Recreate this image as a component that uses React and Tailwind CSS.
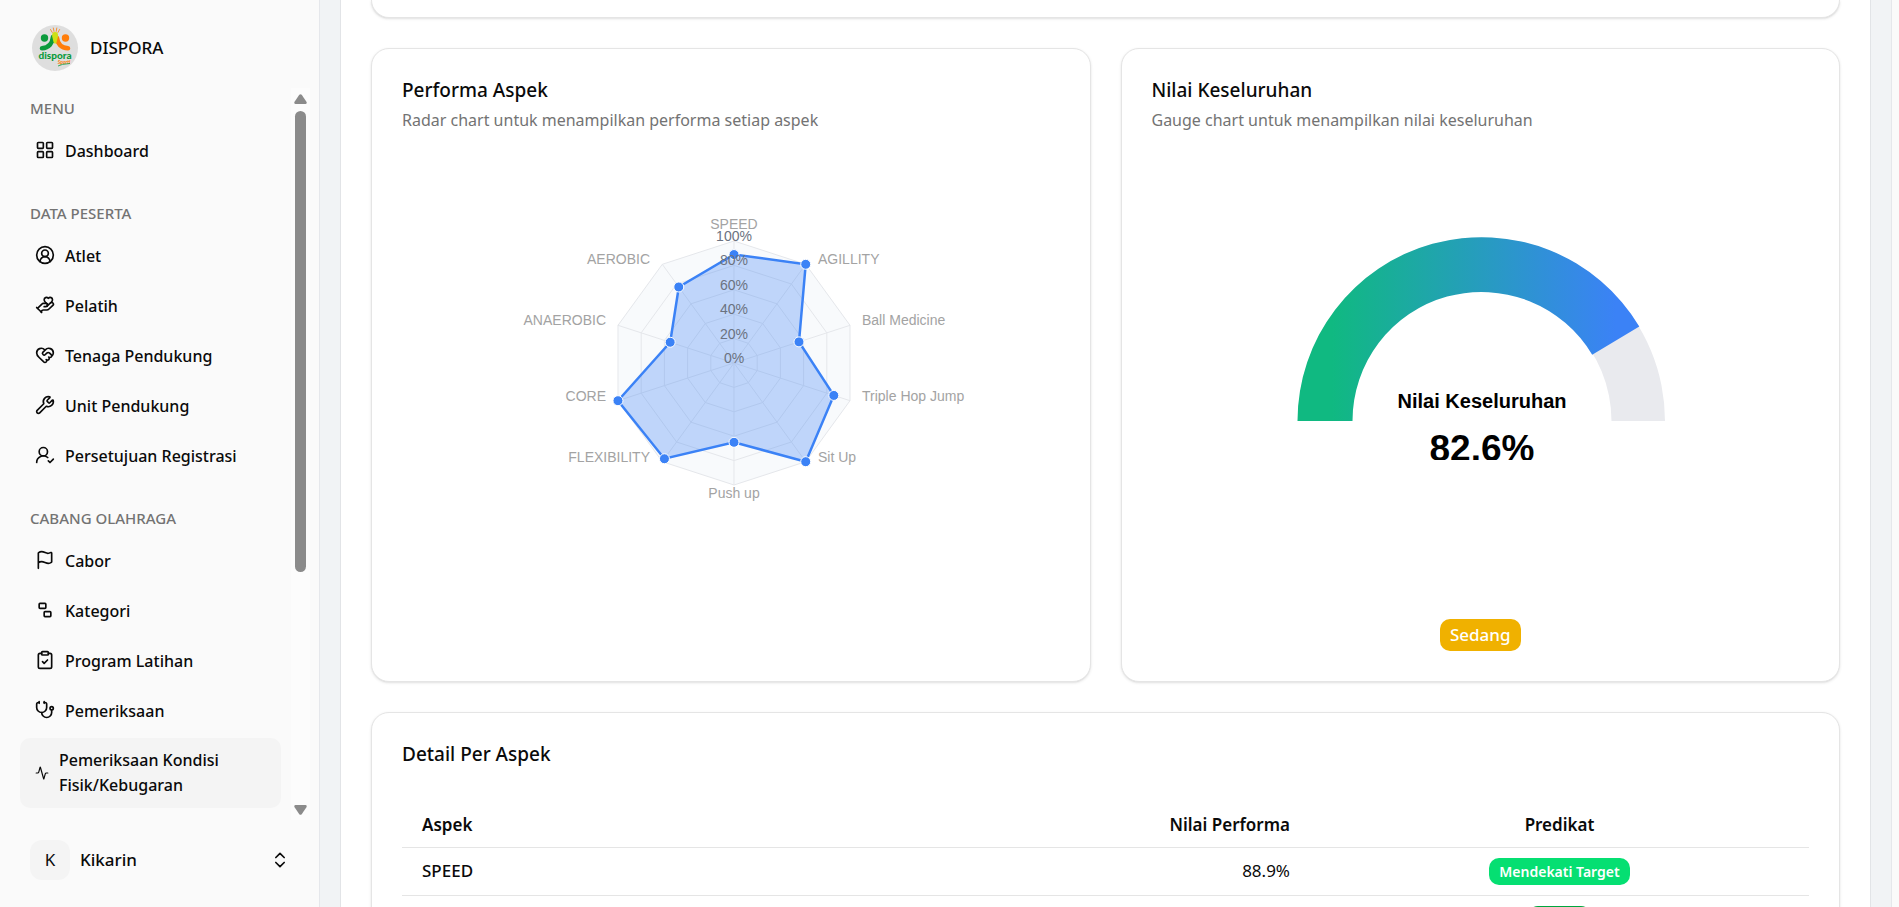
import React from "react";
import {
  LayoutGrid, CircleUserRound, HandHeart, HeartHandshake, Wrench, UserRoundCheck,
  Flag, Ungroup, ClipboardCheck, Stethoscope, Activity, ChevronsUpDown,
} from "lucide-react";

const groups = [
  { label: "MENU", items: [["Dashboard", LayoutGrid]] },
  {
    label: "DATA PESERTA",
    items: [
      ["Atlet", CircleUserRound],
      ["Pelatih", HandHeart],
      ["Tenaga Pendukung", HeartHandshake],
      ["Unit Pendukung", Wrench],
      ["Persetujuan Registrasi", UserRoundCheck],
    ],
  },
  {
    label: "CABANG OLAHRAGA",
    items: [
      ["Cabor", Flag],
      ["Kategori", Ungroup],
      ["Program Latihan", ClipboardCheck],
      ["Pemeriksaan", Stethoscope],
    ],
  },
];

function Logo() {
  return (
    <svg viewBox="0 0 46 46" className="size-[46px] shrink-0" aria-hidden="true">
      <circle cx="23" cy="23" r="23" fill="#dedede" />
      <g stroke="#f5923a" strokeWidth="1" strokeLinecap="round">
        <path d="M18.500 4.500l1.800 3M21.300 3l.7 3.400M24.800 3l-.6 3.400M27.600 4.500l-1.700 3" />
      </g>
      <circle cx="12.500" cy="13" r="3.700" fill="#0b9a3c" />
      <circle cx="33.500" cy="13" r="3.700" fill="#ff7d0a" />
      <path d="M21 12c-.5 6-4 10.800-11 11.300" stroke="#0b9a3c" strokeWidth="4.600" strokeLinecap="round" fill="none" />
      <path d="M25 13c.5 5.500 4 9.800 11 10.300" stroke="#ff7d0a" strokeWidth="4.600" strokeLinecap="round" fill="none" />
      <path d="M23 7c2.600 0 3.400 2 3 4.500L24.500 17.500 23 19 21.500 17 20.200 11.500C19.800 9 20.500 7 23 7z" fill="#cfe016" />
      <text x="23" y="34" textAnchor="middle" fontFamily="Lato, sans-serif" fontWeight="900" fontSize="10" fill="#0b9a3c">dispora</text>
      <text x="32" y="39" textAnchor="middle" fontFamily="Lato, sans-serif" fontStyle="italic" fontWeight="700" fontSize="5" fill="#ff7d0a">Sporti</text>
      <path d="M26 41q3-2 12-2.500" stroke="#0b9a3c" strokeWidth=".8" fill="none" />
    </svg>
  );
}

function Scrollbar() {
  return (
    <div className="flex w-[19px] shrink-0 flex-col items-center bg-[#fcfcfc] pt-[6px] pb-[5px]" aria-hidden="true">
      <svg width="13" height="10" viewBox="0 0 13 10"><path d="M5.300.8Q6.500-.5 7.700.8L12.600 8Q13 10 11.500 10H1.500Q0 10 .4 8z" fill="#8b8b8b" /></svg>
      <div className="mt-[7px] h-[461px] w-[11px] rounded-full bg-[#8b8b8b]" />
      <svg className="mt-auto" width="13" height="10" viewBox="0 0 13 10"><path d="M5.300 9.200Q6.500 10.500 7.700 9.200L12.600 2Q13 0 11.500 0H1.500Q0 0 .4 2z" fill="#8b8b8b" /></svg>
    </div>
  );
}

function Sidebar() {
  return (
    <aside className="flex w-80 shrink-0 flex-col border-r border-[#e5e7eb] bg-[#fafafa]">
      <a href="#home" className="flex h-[88px] items-center gap-3 pt-2 pl-8 text-[17px] font-medium">
        <Logo />
        DISPORA
      </a>
      <div className="flex min-h-0 flex-1">
        <nav className="min-w-0 flex-1 overflow-hidden px-5 pt-[2px] text-[16px] font-medium">
          {groups.map((g, i) => (
            <section key={g.label} className={i ? "mt-[19px]" : ""}>
              <h2 className="flex h-9 items-center pl-[10px] text-[15px] font-medium text-[#737373]">{g.label}</h2>
              <ul>
                {g.items.map(([name, Icon]) => (
                  <li key={name}>
                    <a href="#item" className="flex h-[50px] items-center gap-[10px] rounded-[10px] pl-[15px] whitespace-nowrap">
                      <Icon className="mb-[2px] size-5 shrink-0" strokeWidth={2} />
                      {name}
                    </a>
                  </li>
                ))}
              </ul>
            </section>
          ))}
          <a href="#active" aria-current="page" className="mt-[2px] mr-[-10px] flex h-[70px] items-center gap-[10px] rounded-[10px] bg-[#f4f4f4] pr-9 pl-[15px] leading-[25px]">
            <Activity className="size-[14px] shrink-0" />
            <span>Pemeriksaan Kondisi Fisik/Kebugaran</span>
          </a>
        </nav>
        <Scrollbar />
        <div className="w-[9px]" />
      </div>
      <button type="button" className="flex h-[87px] items-center pr-[29px] pb-[7px] pl-[30px] text-left text-[17px] font-medium">
        <span className="flex size-10 items-center justify-center rounded-xl bg-[#f4f4f4] font-normal">K</span>
        <span className="ml-[10px] flex-1">Kikarin</span>
        <ChevronsUpDown className="size-5" />
      </button>
    </aside>
  );
}

const CX = 235;
const CY = 163;
const point = (i, v, rx = 122, ry = 122) => {
  const a = (Math.PI * 2 * i) / 10;
  return [CX + Math.sin(a) * rx * v, CY - Math.cos(a) * ry * v];
};
const toPoints = (vals) => vals.map((v, i) => point(i, v).map((n) => n.toFixed(1)).join(",")).join(" ");
const values = [0.889, 1, 0.56, 0.86, 1, 0.65, 0.97, 1, 0.55, 0.77];
const labels = [
  ["SPEED", 235, 29, "middle"],
  ["AGILLITY", 319, 64, "start"],
  ["Ball Medicine", 363, 125, "start"],
  ["Triple Hop Jump", 363, 201, "start"],
  ["Sit Up", 319, 262, "start"],
  ["Push up", 235, 298, "middle"],
  ["FLEXIBILITY", 151, 262, "end"],
  ["CORE", 107, 201, "end"],
  ["ANAEROBIC", 107, 125, "end"],
  ["AEROBIC", 151, 64, "end"],
];

function RadarChart() {
  return (
    <svg width="470" height="320" viewBox="0 0 470 320" role="img" aria-label="Performa Aspek" fontFamily="'Liberation Sans', Arial, sans-serif" fontSize="14">
      {[1, 0.8, 0.6, 0.4, 0.2].map((r) => (
        <polygon key={r} points={toPoints(Array(10).fill(r))} fill="#f8fafc" stroke="#e5e7eb" />
      ))}
      {values.map((_, i) => {
        const [x, y] = point(i, 1);
        return <line key={i} x1={CX} y1={CY} x2={x} y2={y} stroke="#e5e7eb" />;
      })}
      <polygon points={toPoints(values)} fill="#3b82f6" fillOpacity="0.3" stroke="#3b82f6" strokeWidth="2.500" />
      {values.map((v, i) => {
        const [x, y] = point(i, v);
        return <circle key={i} cx={x} cy={y} r="5" fill="#3b82f6" stroke="#fff" />;
      })}
      {[0, 20, 40, 60, 80, 100].map((p) => (
        <text key={p} x={CX} y={CY - p * 1.22} textAnchor="middle" fill="#6b7280">{p}%</text>
      ))}
      {labels.map(([t, x, y, anchor]) => (
        <text key={t} x={x} y={y} textAnchor={anchor} fill="#a3a3a3">{t}</text>
      ))}
    </svg>
  );
}

function GaugeChart() {
  return (
    <svg width="370" height="224" viewBox="0 0 370 224" role="img" aria-label="Nilai Keseluruhan 82.6%" fontFamily="'Liberation Sans', Arial, sans-serif" fontWeight="700">
      <defs>
        <linearGradient id="gauge" x1="0" x2="1" y1="0" y2="0">
          <stop offset="0.1" stopColor="#10b981" />
          <stop offset="0.93" stopColor="#3b82f6" />
        </linearGradient>
      </defs>
      <path d="M2 185A183.500 183.500 0 0 1 369 185H315.500A130 130 0 0 0 55.500 185z" fill="#e9eaee" />
      <path d="M1.500 185A184 184 0 0 1 343.300 90.500L296.200 118.700A129 129 0 0 0 56.500 185z" fill="url(#gauge)" />
      <text x="186" y="172" textAnchor="middle" fontSize="20">Nilai Keseluruhan</text>
      <text x="186" y="225" textAnchor="middle" fontSize="37">82.6%</text>
    </svg>
  );
}

const card = "border border-[#e5e5e5] bg-white shadow-sm rounded-[18px]";

function ChartCard({ title, text, children }) {
  return (
    <section className={`flex h-[634px] flex-col px-[30px] pt-[29px] pb-[30px] ${card}`}>
      <h2 className="text-[19px] leading-6 font-medium">{title}</h2>
      <p className="mt-[6px] text-[16px] leading-[25px] text-[#737373]">{text}</p>
      {children}
    </section>
  );
}

const rows = [
  ["SPEED", "88.9%", "Mendekati Target", "bg-[#05df72]"],
  ["AGILLITY", "100%", "Target", "bg-[#00a63e]"],
];

export default function App() {
  return (
    <div className="flex h-screen overflow-hidden bg-[#fafafa] text-[#0a0a0a]" style={{ fontFamily: "'Noto Sans', sans-serif" }}>
      <Sidebar />
      <div className="mr-[7px] min-w-0 flex-1 overflow-hidden border-r border-[#e5e7eb] bg-[#f1f3f5] px-5">
        <main className="flex flex-col gap-[30px] border-x border-[#e2e4e7] bg-white px-[30px]">
          <div className={`h-[18px] rounded-t-none border-t-0 ${card}`} />
          <div className="grid grid-cols-2 gap-[30px]">
            <ChartCard title="Performa Aspek" text="Radar chart untuk menampilkan performa setiap aspek">
              <div className="mt-[67px] flex justify-center pl-[6px]"><RadarChart /></div>
            </ChartCard>
            <ChartCard title="Nilai Keseluruhan" text="Gauge chart untuk menampilkan nilai keseluruhan">
              <div className="mt-[103px] flex justify-center pl-[2px]"><GaugeChart /></div>
              <span className="mt-auto self-center rounded-[10px] bg-[#f0b100] px-[10px] text-[17px] leading-8 font-medium text-white">Sedang</span>
            </ChartCard>
          </div>
          <section className={`px-[30px] pt-[29px] pb-[30px] ${card}`}>
            <h2 className="text-[19px] leading-6 font-medium">Detail Per Aspek</h2>
            <table className="mt-[33px] w-full table-fixed text-[17px]">
              <thead>
                <tr className="h-12 border-b border-[#e5e5e5]">
                  <th className="px-5 pt-1 text-left font-semibold">Aspek</th>
                  <th className="px-5 pt-1 text-right font-semibold">Nilai Performa</th>
                  <th className="w-[499px] px-5 pt-1 text-center font-semibold">Predikat</th>
                </tr>
              </thead>
              <tbody>
                {rows.map(([a, n, p, color]) => (
                  <tr key={a} className="h-12 border-b border-[#e5e5e5]">
                    <td className="px-5 font-medium">{a}</td>
                    <td className="px-5 text-right">{n}</td>
                    <td className="px-5 text-center">
                      <span className={`inline-block rounded-[10px] px-[10px] align-middle text-[14px] leading-[27px] font-semibold text-white ${color}`}>{p}</span>
                    </td>
                  </tr>
                ))}
              </tbody>
            </table>
          </section>
        </main>
      </div>
    </div>
  );
}
